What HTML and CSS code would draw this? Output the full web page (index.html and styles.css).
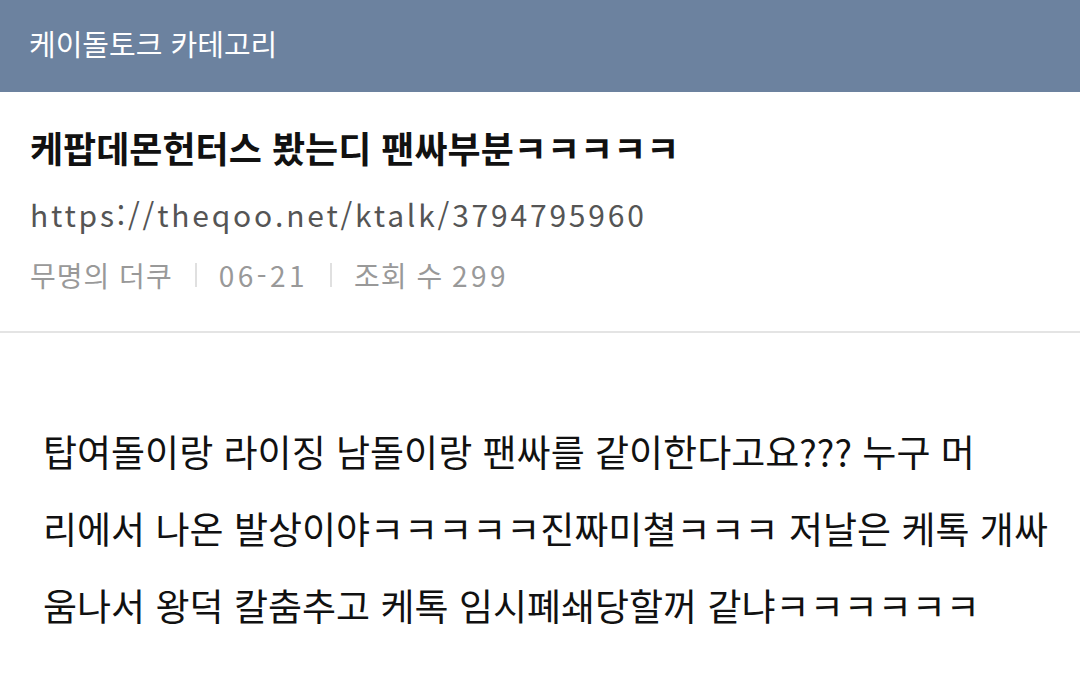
FILE: index.html
```html
<!DOCTYPE html>
<html lang="ko">
<head>
  <meta charset="UTF-8">
  <title>케이돌토크 카테고리</title>
  <link rel="stylesheet" href="styles.css">
</head>
<body>
  <div class="topbar">케이돌토크 카테고리</div>

  <div class="post-head">
    <h1 class="post-title">케팝데몬헌터스 봤는디 팬싸부분ㅋㅋㅋㅋㅋ</h1>
    <div class="post-url">https://theqoo.net/ktalk/3794795960</div>
    <div class="post-meta">
      <span>무명의 더쿠</span>
      <span class="sep"></span>
      <span class="num">06-21</span>
      <span class="sep"></span>
      <span>조회 수 <span class="num">299</span></span>
    </div>
  </div>

  <div class="post-body">
    탑여돌이랑 라이징 남돌이랑 팬싸를 같이한다고요??? 누구 머<br>
    리에서 나온 발상이야ㅋㅋㅋㅋㅋ진짜미쳘ㅋㅋㅋ 저날은 케톡 개싸<br>
    움나서 왕덕 칼춤추고 케톡 임시폐쇄당할꺼 같냐ㅋㅋㅋㅋㅋㅋ
  </div>
</body>
</html>
```

FILE: styles.css
```css
body {
  margin: 0;
  background: #fff;
  font-family: "Noto Sans CJK KR", "Noto Sans", sans-serif;
  color: #111;
  overflow: hidden;
}
.topbar {
  height: 92px;
  background: #6c829f;
  color: #fff;
  font-size: 29px;
  line-height: 86px;
  padding-left: 29px;
}
.post-head {
  padding: 25px 30px 32px;
  border-bottom: 2px solid #e4e4e4;
}
.post-title {
  margin: 0;
  font-size: 36px;
  font-weight: bold;
  line-height: 60px;
}
.post-url {
  font-size: 30px;
  letter-spacing: 2.8px;
  color: #555;
  line-height: 74px;
}
.post-meta {
  display: flex;
  align-items: center;
  gap: 22px;
  font-size: 28px;
  letter-spacing: 1px;
  color: #999;
  line-height: 48px;
}
.num {
  letter-spacing: 3.5px;
}
.sep {
  width: 2px;
  height: 24px;
  background: #e0e0e0;
}
.post-body {
  padding: 80px 0 0 43px;
  font-size: 37px;
  line-height: 77px;
  white-space: nowrap;
}
```
